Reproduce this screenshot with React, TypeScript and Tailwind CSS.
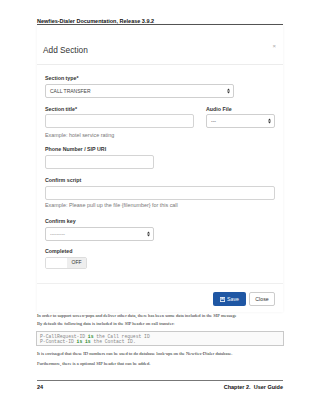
import React from "react";

const sans = { fontFamily: '"Liberation Sans", Arial, sans-serif' };
const serif = { fontFamily: '"Liberation Serif", "Times New Roman", serif' };
const mono = { fontFamily: '"Liberation Mono", "Courier New", monospace' };

function Arrows() {
  return (
    <svg width="3" height="6" viewBox="0 0 3 6" className="shrink-0">
      <path d="M0 2.4 L1.5 0.6 L3 2.4 Z" fill="#333" />
      <path d="M0 3.6 L1.5 5.4 L3 3.6 Z" fill="#333" />
    </svg>
  );
}

function Select({ w, text, textClass }: { w: string; text: string; textClass?: string }) {
  return (
    <div className={`${w} h-[14px] border border-[#cfcfcf] rounded-[2px] bg-white flex items-center justify-between pl-[4px] pr-[3px]`}>
      <span className={`text-[5px] leading-[6px] ${textClass ?? "text-[#444]"}`}>{text}</span>
      <Arrows />
    </div>
  );
}

function Input({ w }: { w: string }) {
  return <div className={`${w} h-[14px] border border-[#d4d4d4] rounded-[2px] bg-white`} />;
}

function Label({ children, className }: { children: React.ReactNode; className?: string }) {
  return <div className={`text-[5.3px] leading-[6px] font-bold text-[#333] ${className ?? ""}`}>{children}</div>;
}

function Help({ children, className }: { children: React.ReactNode; className?: string }) {
  return <div className={`text-[5.4px] leading-[6px] text-[#777] whitespace-nowrap ${className ?? ""}`}>{children}</div>;
}

export default function App() {
  return (
    <div className="w-[320px] h-[414px] bg-white overflow-hidden" style={sans}>
      <div className="mx-[37px] w-[246px]">
        {/* Page header */}
        <div className="pt-[18px] border-b border-[#555]">
          <div className="text-[5.5px] leading-[6px] font-bold text-[#111] whitespace-nowrap">Newfies-Dialer Documentation, Release 3.9.2</div>
        </div>

        {/* Modal */}
        <div className="shadow-[0_0_3px_rgba(0,0,0,0.06)]">
          <div className="relative pt-[20px] pb-[9px] pl-[6px] border-b border-[#ececec]">
            <div className="text-[8.3px] leading-[10px] text-[#333]">Add Section</div>
            <div className="absolute right-[7px] top-[18px] text-[6px] leading-[6px] text-[#aaa]">×</div>
          </div>

          <div className="pl-[8px] pr-[8px]">
            <Label className="mt-[10px]">Section type*</Label>
            <div className="mt-[3px]">
              <Select w="w-[189px]" text="CALL TRANSFER" />
            </div>

            <div className="flex mt-[8px]">
              <div className="w-[161px]">
                <Label>Section title*</Label>
                <div className="mt-[2px]">
                  <Input w="w-[149px]" />
                </div>
              </div>
              <div>
                <Label>Audio File</Label>
                <div className="mt-[2px]">
                  <Select w="w-[69px]" text="---" />
                </div>
              </div>
            </div>
            <Help className="mt-[4px]">Example: hotel service rating</Help>

            <Label className="mt-[8px]">Phone Number / SIP URI</Label>
            <div className="mt-[3px]">
              <Input w="w-[109px]" />
            </div>

            <Label className="mt-[8px]">Confirm script</Label>
            <div className="mt-[3px]">
              <Input w="w-[230px]" />
            </div>
            <Help className="mt-[2px]">Example: Please pull up the file {"{filenumber}"} for this call</Help>

            <Label className="mt-[10px]">Confirm key</Label>
            <div className="mt-[3px]">
              <Select w="w-[109px]" text="---------" textClass="text-[#888]" />
            </div>

            <Label className="mt-[7px]">Completed</Label>
            <div className="mt-[3px] flex w-[42px] h-[12px] border border-[#ddd] rounded-[2px] overflow-hidden">
              <div className="w-[21px] bg-white" />
              <div className="flex-1 bg-[#eeeeee] flex items-center justify-center text-[5px] text-[#333]">OFF</div>
            </div>
          </div>

          <div className="mt-[14px] border-t border-[#efefef]" />

          <div className="flex justify-end gap-[3px] pr-[8px] mt-[8px] pb-[6px]">
            <div className="h-[14px] w-[33px] bg-[#1f57a4] rounded-[2px] flex items-center justify-center gap-[2px]">
              <svg width="5" height="5" viewBox="0 0 10 10">
                <rect x="0.6" y="0.6" width="8.8" height="8.8" fill="none" stroke="#fff" strokeWidth="1.2" />
                <rect x="2.5" y="0.6" width="5" height="3" fill="#fff" />
                <rect x="2" y="5.5" width="6" height="3.9" fill="none" stroke="#fff" strokeWidth="1" />
              </svg>
              <span className="text-[5.2px] leading-[6px] text-white">Save</span>
            </div>
            <div className="h-[14px] w-[26px] bg-white border border-[#ccc] rounded-[2px] flex items-center justify-center">
              <span className="text-[5.2px] leading-[6px] text-[#333]">Close</span>
            </div>
          </div>
        </div>

        {/* Document text */}
        <div style={serif} className="text-[#222]">
          <div className="mt-[1px] text-[4.6px] leading-[6px] whitespace-nowrap">
            In order to support screen-pops and deliver other data, there has been some data included in the SIP message
          </div>
          <div className="mt-[2px] text-[4.6px] leading-[6px] whitespace-nowrap">
            By default the following data is included in the SIP header on call transfer:
          </div>
        </div>
        <div className="mt-[4px] mx-[-1px] h-[15px] border border-[#c9c9c9] bg-[#fafafa] pl-[3px] pt-[2px] text-[4.7px] leading-[5px] text-[#888]" style={mono}>
          <div className="whitespace-pre">P-CallRequest-ID <span className="text-[#2a8a2a] font-bold">is</span> the Call request ID</div>
          <div className="whitespace-pre">P-Contact-ID <span className="text-[#2a8a2a] font-bold">is</span> <span className="text-[#2a8a2a] font-bold">is</span> the Contact ID.</div>
        </div>
        <div style={serif} className="text-[#222]">
          <div className="mt-[5px] text-[4.6px] leading-[6px] whitespace-nowrap">
            It is envisaged that these ID numbers can be used to do database look-ups on the Newfies-Dialer database.
          </div>
          <div className="mt-[4px] text-[4.6px] leading-[6px] whitespace-nowrap">
            Furthermore, there is a optional SIP header that can be added.
          </div>
        </div>

        {/* Footer */}
        <div className="mt-[13px] border-t border-[#777] flex justify-between pt-[3px]">
          <span className="text-[5.5px] leading-[6px] font-bold text-[#111]">24</span>
          <span className="text-[5.5px] leading-[6px] font-bold text-[#111]">Chapter 2.&nbsp; User Guide</span>
        </div>
      </div>
    </div>
  );
}
